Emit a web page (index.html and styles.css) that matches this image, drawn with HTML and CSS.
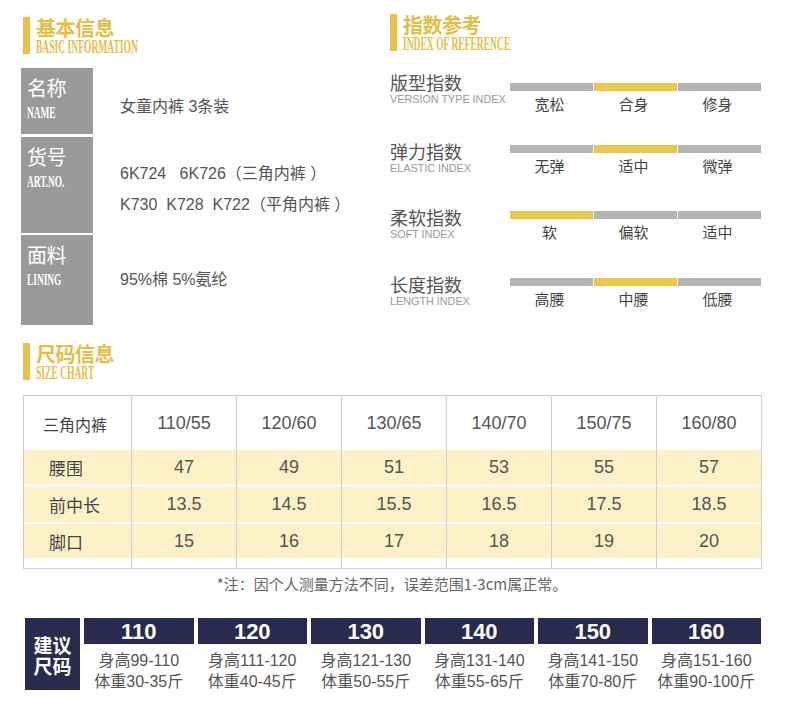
FILE: index.html
```html
<!DOCTYPE html>
<html lang="zh-CN">
<head>
<meta charset="utf-8">
<title>尺码信息</title>
<link rel="stylesheet" href="styles.css">
</head>
<body>
<div class="page">
  <div class="top">
    <section class="info">
      <div class="sec-head">
        <div class="sec-bar"></div>
        <div class="sec-txt">
          <div class="sec-title">基本信息</div>
          <div class="sec-sub"><span>BASIC INFORMATION</span></div>
        </div>
      </div>
      <div class="info-table">
        <div class="info-row r1">
          <div class="info-label"><div class="lab-cn">名称</div><div class="lab-en"><span>NAME</span></div></div>
          <div class="info-value">女童内裤 3条装</div>
        </div>
        <div class="info-row r2">
          <div class="info-label"><div class="lab-cn">货号</div><div class="lab-en"><span>ART.NO.</span></div></div>
          <div class="info-value multi">6K724&nbsp;&nbsp; 6K726（三角内裤 ）<br>K730&nbsp; K728&nbsp; K722（平角内裤 ）</div>
        </div>
        <div class="info-row r3">
          <div class="info-label"><div class="lab-cn">面料</div><div class="lab-en"><span>LINING</span></div></div>
          <div class="info-value">95%棉 5%氨纶</div>
        </div>
      </div>
    </section>
    <section class="index">
      <div class="sec-head right">
        <div class="sec-bar"></div>
        <div class="sec-txt">
          <div class="sec-title">指数参考</div>
          <div class="sec-sub"><span>INDEX OF REFERENCE</span></div>
        </div>
      </div>
      <div class="idx-list">
        <div class="idx-row first">
          <div class="idx-name"><div class="idx-cn">版型指数</div><div class="idx-en">VERSION TYPE INDEX</div></div>
          <div class="idx-scale">
            <div class="segs"><i></i><i class="on"></i><i></i></div>
            <div class="seg-labels"><span>宽松</span><span>合身</span><span>修身</span></div>
          </div>
        </div>
        <div class="idx-row">
          <div class="idx-name"><div class="idx-cn">弹力指数</div><div class="idx-en">ELASTIC INDEX</div></div>
          <div class="idx-scale">
            <div class="segs"><i></i><i class="on"></i><i></i></div>
            <div class="seg-labels"><span>无弹</span><span>适中</span><span>微弹</span></div>
          </div>
        </div>
        <div class="idx-row">
          <div class="idx-name"><div class="idx-cn">柔软指数</div><div class="idx-en">SOFT INDEX</div></div>
          <div class="idx-scale">
            <div class="segs"><i class="on"></i><i></i><i></i></div>
            <div class="seg-labels"><span>软</span><span>偏软</span><span>适中</span></div>
          </div>
        </div>
        <div class="idx-row">
          <div class="idx-name"><div class="idx-cn">长度指数</div><div class="idx-en">LENGTH INDEX</div></div>
          <div class="idx-scale">
            <div class="segs"><i></i><i class="on"></i><i></i></div>
            <div class="seg-labels"><span>高腰</span><span>中腰</span><span>低腰</span></div>
          </div>
        </div>
      </div>
    </section>
  </div>

  <div class="sec-head size-head">
    <div class="sec-bar"></div>
    <div class="sec-txt">
      <div class="sec-title">尺码信息</div>
      <div class="sec-sub"><span>SIZE CHART</span></div>
    </div>
  </div>

  <table class="chart">
    <colgroup><col class="c0"><col><col><col><col><col><col></colgroup>
    <tr class="head">
      <td class="rh">三角内裤</td><td>110/55</td><td>120/60</td><td>130/65</td><td>140/70</td><td>150/75</td><td>160/80</td>
    </tr>
    <tr class="y y1">
      <td class="rl">腰围</td><td>47</td><td>49</td><td>51</td><td>53</td><td>55</td><td>57</td>
    </tr>
    <tr class="y y2">
      <td class="rl">前中长</td><td>13.5</td><td>14.5</td><td>15.5</td><td>16.5</td><td>17.5</td><td>18.5</td>
    </tr>
    <tr class="y y3">
      <td class="rl">脚口</td><td>15</td><td>16</td><td>17</td><td>18</td><td>19</td><td>20</td>
    </tr>
    <tr class="spacer"><td></td><td></td><td></td><td></td><td></td><td></td><td></td></tr>
  </table>

  <p class="note">*注：因个人测量方法不同，误差范围1-3cm属正常。</p>

  <div class="rec">
    <div class="rec-title">建议<br>尺码</div>
    <div class="rec-cards">
      <div class="card"><div class="card-num">110</div><div class="card-txt">身高99-110<br>体重30-35斤</div></div>
      <div class="card"><div class="card-num">120</div><div class="card-txt">身高111-120<br>体重40-45斤</div></div>
      <div class="card"><div class="card-num">130</div><div class="card-txt">身高121-130<br>体重50-55斤</div></div>
      <div class="card"><div class="card-num">140</div><div class="card-txt">身高131-140<br>体重55-65斤</div></div>
      <div class="card"><div class="card-num">150</div><div class="card-txt">身高141-150<br>体重70-80斤</div></div>
      <div class="card"><div class="card-num">160</div><div class="card-txt">身高151-160<br>体重90-100斤</div></div>
    </div>
  </div>
</div>
</body>
</html>
```

FILE: styles.css
```css
html, body {
  margin: 0;
  padding: 0;
  background: #ffffff;
}
body {
  font-family: "Liberation Sans", "Noto Sans CJK SC", sans-serif;
  color: #555555;
  width: 790px;
  height: 703px;
  overflow: hidden;
}
.page {
  width: 790px;
}

/* ---------- top area ---------- */
.top {
  display: flex;
  align-items: flex-start;
}
.info {
  width: 369px;
  margin-left: 21px;
}
.index {
  width: 400px;
}

/* section heading */
.sec-head {
  display: flex;
  align-items: stretch;
}
.info .sec-head {
  margin-left: 2px;
  margin-top: 17px;
}
.sec-head.right {
  margin-top: 14px;
}
.sec-bar {
  width: 7px;
  background: #e8c24a;
}
.sec-txt {
  margin-left: 6px;
}
.sec-title {
  font-family: "Noto Sans CJK SC", sans-serif;
  font-weight: 700;
  font-size: 20px;
  line-height: 22px;
  color: #e6bd45;
  letter-spacing: -0.5px;
}
.sec-sub {
  margin-top: 1px;
  height: 14px;
  line-height: 14px;
  white-space: nowrap;
  overflow: visible;
}
.sec-sub span {
  display: inline-block;
  font-family: "Liberation Serif", serif;
  font-weight: 700;
  font-size: 18px;
  line-height: 14px;
  color: #e6bd45;
  transform: scaleX(0.53);
  transform-origin: left center;
}

/* info table */
.info-table {
  margin-top: 14px;
  display: flex;
  flex-direction: column;
}
.info-row {
  display: flex;
  align-items: center;
}
.info-row.r1 .info-label { height: 66px; }
.info-row.r2 { margin-top: 3px; }
.info-row.r2 .info-label { height: 96px; }
.info-row.r3 { margin-top: 2px; }
.info-row.r3 .info-label { height: 90px; }
.info-label {
  align-self: flex-start;
  width: 72px;
  background: #9a9a9a;
  color: #ffffff;
  box-sizing: border-box;
  padding: 8px 0 0 6px;
}
.lab-cn {
  font-family: "Noto Sans CJK SC", sans-serif;
  font-size: 20px;
  line-height: 24px;
  letter-spacing: -0.5px;
}
.lab-en {
  margin-top: 6px;
  height: 14px;
  line-height: 14px;
  white-space: nowrap;
}
.lab-en span {
  display: inline-block;
  font-family: "Liberation Serif", serif;
  font-weight: 700;
  font-size: 17px;
  line-height: 14px;
  transform: scaleX(0.55);
  transform-origin: left center;
}
.info-value {
  padding-left: 27px;
  font-size: 16px;
  line-height: 22px;
  color: #555555;
  white-space: nowrap;
}
.info-row.r1 .info-value { padding-top: 12px; }
.info-value.multi {
  line-height: 31px;
  padding-top: 7px;
}

/* index */
.idx-list {
  margin-top: 21px;
  display: grid;
  grid-template-rows: 69px 66px 67px auto;
}
.idx-row {
  display: grid;
  grid-template-columns: 120px 251px;
  align-items: start;
}
.idx-cn {
  font-family: "Noto Sans CJK SC", sans-serif;
  font-size: 18px;
  line-height: 20px;
  color: #555555;
}
.idx-en {
  margin-top: 1px;
  font-size: 10.8px;
  line-height: 12px;
  color: #9a9a9a;
  white-space: nowrap;
}
.idx-scale {
  margin-top: 4px;
}
.idx-row.first .idx-scale {
  margin-top: 11px;
}
.segs {
  display: grid;
  grid-template-columns: repeat(3, 83px);
  column-gap: 1px;
}
.segs i {
  display: block;
  height: 8px;
  background: #b5b5b5;
}
.segs i.on {
  background: #ebc84b;
}
.seg-labels {
  margin-top: 5px;
  display: grid;
  grid-template-columns: repeat(3, 83px);
  column-gap: 1px;
}
.seg-labels span {
  text-align: center;
  font-family: "Noto Sans CJK SC", sans-serif;
  font-size: 15px;
  line-height: 16px;
  color: #444444;
  padding-right: 4px;
}

/* ---------- size chart ---------- */
.size-head {
  margin-left: 23px;
  margin-top: 18px;
}
.chart {
  margin: 15px 0 0 23px;
  width: 739px;
  border-collapse: collapse;
  table-layout: fixed;
  border: 1px solid #cfcfcf;
}
.chart col.c0 {
  width: 108px;
}
.chart td {
  border-left: 1px solid #cfcfcf;
  border-right: 1px solid #cfcfcf;
  padding: 0;
  text-align: center;
  font-size: 18px;
  color: #555555;
  vertical-align: middle;
}
.chart tr.head td {
  height: 53px;
  padding-top: 1px;
}
.chart td.rh {
  text-align: left;
  padding-left: 19px;
  font-family: "Noto Sans CJK SC", sans-serif;
  font-size: 16px;
  color: #444444;
}
.chart td.rl {
  text-align: left;
  padding-left: 25px;
  font-family: "Noto Sans CJK SC", sans-serif;
  font-size: 17px;
  color: #444444;
}
.chart tr.y td {
  background: linear-gradient(#fdf2c7, #fdf2c7) left bottom / 100% 34px no-repeat;
}
.chart tr.y1 td { height: 34px; }
.chart tr.y2 td {
  height: 35px;
  padding-top: 3px;
  background-size: 100% 35px;
}
.chart tr.y3 td {
  height: 34px;
  padding-top: 2px;
}
.chart tr.spacer td {
  height: 10px;
}

.note {
  margin: 5px 0 0;
  text-align: center;
  font-family: "Noto Sans CJK SC", sans-serif;
  font-size: 15px;
  line-height: 20px;
  color: #666666;
  padding-right: 6px;
}

/* ---------- recommendation ---------- */
.rec {
  margin: 24px 0 0 25px;
  width: 736px;
  display: flex;
  gap: 4px;
}
.rec-title {
  width: 55px;
  height: 72px;
  background: #282b4d;
  color: #ffffff;
  font-family: "Noto Sans CJK SC", sans-serif;
  font-weight: 700;
  font-size: 19px;
  line-height: 21px;
  display: flex;
  align-items: center;
  justify-content: center;
  text-align: center;
  padding-top: 1px;
  box-sizing: border-box;
}
.rec-cards {
  flex: 1;
  display: grid;
  grid-template-columns: repeat(6, 1fr);
  column-gap: 4px;
}
.card-num {
  height: 26px;
  background: #282b4d;
  color: #ffffff;
  font-weight: 700;
  font-size: 22px;
  line-height: 27px;
  text-align: center;
}
.card-txt {
  margin-top: 6px;
  text-align: center;
  font-size: 16px;
  line-height: 21px;
  color: #555555;
  white-space: nowrap;
}
```
